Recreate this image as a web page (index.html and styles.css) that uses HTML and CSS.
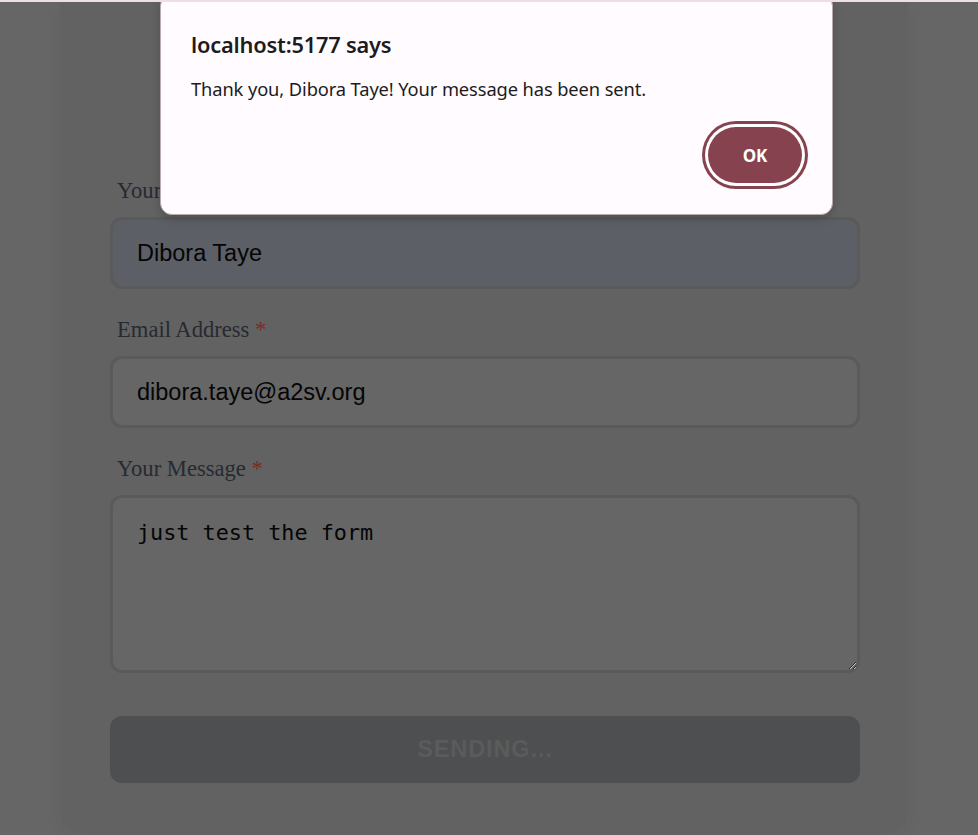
FILE: index.html
```html
<!DOCTYPE html>
<html lang="en">
<head>
<meta charset="utf-8">
<title>Contact</title>
<link rel="stylesheet" href="styles.css">
</head>
<body>
<div class="topline"></div>
<main class="page">
  <section class="card">
    <form class="form">
      <div class="field">
        <label class="label">Your Name <span class="req">*</span></label>
        <input class="input input-autofill" type="text" value="Dibora Taye">
      </div>
      <div class="field">
        <label class="label">Email Address <span class="req">*</span></label>
        <input class="input" type="email" value="dibora.taye@a2sv.org">
      </div>
      <div class="field field-last">
        <label class="label">Your Message <span class="req">*</span></label>
        <textarea class="input textarea">just test the form</textarea>
      </div>
      <button class="submit" type="button">SENDING...</button>
    </form>
  </section>
</main>
<div class="dialog" role="alertdialog">
  <div class="dialog-title">localhost:5177 says</div>
  <div class="dialog-msg">Thank you, Dibora Taye! Your message has been sent.</div>
  <div class="dialog-actions">
    <button class="ok" type="button">OK</button>
  </div>
</div>
</body>
</html>
```
FILE: styles.css
```css
html, body {
  margin: 0;
  padding: 0;
}
body {
  width: 978px;
  height: 835px;
  overflow: hidden;
  background: #666666;
  font-family: "Liberation Serif", serif;
}
.topline {
  position: absolute;
  left: 0;
  top: 0;
  width: 978px;
  height: 2px;
  background: #efdfe2;
  z-index: 20;
}
.page {
  height: 835px;
  display: flex;
  flex-direction: column;
  justify-content: flex-end;
  padding-left: 60px;
  box-sizing: border-box;
}
.card {
  width: 848px;
  box-sizing: border-box;
  padding: 178px 48px 48px 50px;
  margin-bottom: 4px;
  background: #626262;
  border-radius: 0 0 22px 22px;
  box-shadow: 0 6px 18px rgba(0, 0, 0, 0.05);
}
.form {
  display: flex;
  flex-direction: column;
}
.field {
  display: flex;
  flex-direction: column;
  margin-bottom: 28px;
}
.field-last {
  margin-bottom: 43px;
}
.label {
  display: block;
  height: 26px;
  line-height: 26px;
  margin: 0 0 13px 7px;
  font-size: 22.6px;
  color: #262a31;
}
.req {
  color: #7a2a28;
}
.input {
  display: block;
  width: 100%;
  box-sizing: border-box;
  height: 72px;
  padding: 0 24px;
  border: 3px solid #5a5a5a;
  border-radius: 12px;
  background: #666666;
  font-family: "Liberation Sans", Arial, sans-serif;
  font-size: 23.5px;
  color: #050505;
  outline: none;
}
.input-autofill {
  background: #5c5f66;
}
.textarea {
  height: 178px;
  padding: 21px 24px;
  font-family: "DejaVu Sans Mono", monospace;
  font-size: 21.8px;
  line-height: 28px;
  resize: vertical;
}
.submit {
  height: 67px;
  border: none;
  border-radius: 12px;
  background: #4e4f51;
  color: #5b5b5b;
  font-family: "Liberation Sans", Arial, sans-serif;
  font-weight: 700;
  font-size: 23.5px;
  letter-spacing: 0.9px;
}
.dialog {
  position: absolute;
  left: 160px;
  top: -6px;
  width: 673px;
  height: 221px;
  box-sizing: border-box;
  padding: 36px 30px 0 30px;
  background: #fffbfe;
  border: 1px solid #b9aaad;
  border-radius: 12px;
  box-shadow: 0 4px 10px rgba(0, 0, 0, 0.18);
  font-family: "Noto Sans", "Open Sans", sans-serif;
  color: #1d1b1d;
  z-index: 10;
}
.dialog-title {
  font-size: 21.8px;
  font-weight: 600;
  line-height: 28px;
  letter-spacing: -0.2px;
}
.dialog-msg {
  margin-top: 18px;
  font-size: 18.3px;
  line-height: 24px;
  letter-spacing: -0.1px;
}
.dialog-actions {
  display: flex;
  justify-content: flex-end;
  margin-top: 26px;
}
.ok {
  width: 94px;
  height: 56px;
  border: none;
  border-radius: 999px;
  background: #86434f;
  color: #ffffff;
  font-family: "Noto Sans", "Open Sans", sans-serif;
  font-size: 17px;
  font-weight: 700;
  box-shadow: 0 0 0 3px #ffffff, 0 0 0 6px #86434f;
}
```
